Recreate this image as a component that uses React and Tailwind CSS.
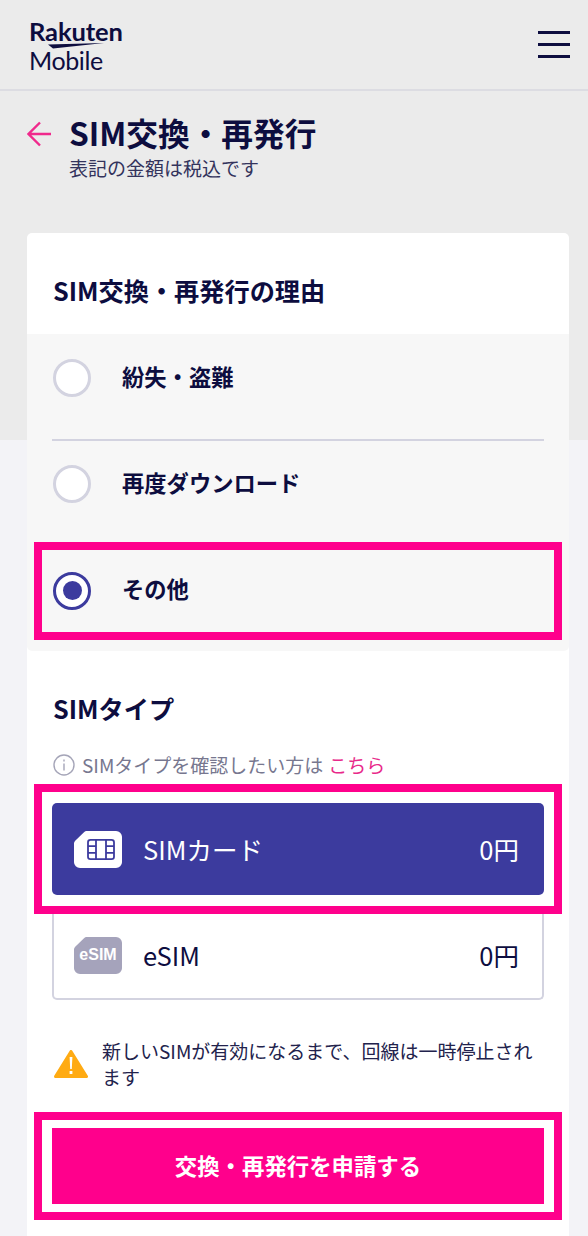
import React from 'react';

const FONT = "font-['Noto_Sans_CJK_JP','Noto_Sans',sans-serif]";

function Radio({ checked }) {
    if (checked) {
        return (
            <span className="w-[38px] h-[38px] rounded-full border-[3px] border-[#3c3b9e] bg-white flex items-center justify-center shrink-0">
                <span className="w-[19px] h-[19px] rounded-full bg-[#3c3b9e]" />
            </span>
        );
    }
    return <span className="w-[38px] h-[38px] rounded-full border-[3px] border-[#d3d3e0] bg-white shrink-0" />;
}

function SimCardIcon() {
    return (
        <svg width="48" height="37" viewBox="0 0 48 38" preserveAspectRatio="none" className="shrink-0">
            <path d="M13 0H42a6 6 0 0 1 6 6V32a6 6 0 0 1-6 6H6a6 6 0 0 1-6-6V13a4 4 0 0 1 1.2-3L10 1.2A4 4 0 0 1 13 0Z" fill="#fff" />
            <g fill="none" stroke="#3c3b9e" strokeWidth="1.8">
                <rect x="14" y="9" width="26" height="20" rx="2.5" />
                <path d="M22 9V29M32 9V29M14 15.5H22M14 22.5H22M32 15.5H40M32 22.5H40" />
            </g>
        </svg>
    );
}

function EsimIcon() {
    return (
        <span className="relative w-12 h-[37px] shrink-0 flex items-center justify-center">
            <svg width="48" height="37" viewBox="0 0 48 38" preserveAspectRatio="none" className="absolute inset-0">
                <path d="M13 0H42a6 6 0 0 1 6 6V32a6 6 0 0 1-6 6H6a6 6 0 0 1-6-6V13a4 4 0 0 1 1.2-3L10 1.2A4 4 0 0 1 13 0Z" fill="#a5a3bb" />
            </svg>
            <span className="relative text-white text-[16px] leading-[20px] font-bold font-['Liberation_Sans',sans-serif]">eSIM</span>
        </span>
    );
}

export default function App() {
    return (
        <div className={`${FONT} w-[588px] h-[1236px] overflow-hidden text-[#0d0d3f] bg-[linear-gradient(to_bottom,#ebebeb_0,#ebebeb_440px,#f3f3f7_440px)]`}>
            <header className="h-[91px] border-b-2 border-[#dcdce2] pl-[29px] pr-[18px] flex items-center justify-between">
                <div className="relative w-[100px] h-[60px] font-['Lato',sans-serif]">
                    <div className="mt-[2px] text-[25.5px] font-bold leading-[29px] tracking-[-0.1px]">Rakuten</div>
                    <svg width="56" height="6" viewBox="0 0 56 6" className="absolute left-[19px] top-[28px]">
                        <path d="M0 1.5 56 0 5 5.5Z" fill="#0d0d3f" />
                    </svg>
                    <div className="text-[25px] font-normal leading-[29px] tracking-[-0.4px]">Mobile</div>
                </div>
                <svg width="32" height="27" viewBox="0 0 32 27" stroke="#0d0d3f" strokeWidth="3">
                    <path d="M0 1.5H32M0 13.5H32M0 25.5H32" />
                </svg>
            </header>

            <div className="h-[142px] pl-[27px] pt-[20px] flex items-start">
                <svg width="24" height="26" viewBox="0 0 24 26" fill="none" stroke="#f0298c" strokeWidth="2.4" className="mt-[10px] shrink-0">
                    <path d="M24 13H2M13 1.5 1.5 13 13 24.5" />
                </svg>
                <div className="ml-[18px]">
                    <h1 className="text-[31.7px] font-bold leading-[42px]">SIM交換・再発行</h1>
                    <p className="mt-px text-[19px] leading-[28px] text-[#33335c]">表記の金額は税込です</p>
                </div>
            </div>

            <main className="ml-[27px] w-[542px] h-[1003px] bg-white rounded-t-[5px]">
                <h2 className="h-[101px] pl-[26px] pt-[38px] text-[25.2px] font-bold leading-[38px]">SIM交換・再発行の理由</h2>

                <div className="bg-[#f7f7f7] pb-[11px] rounded-b-[5px]">
                    <div className="pl-[26px] pt-[25px] pb-[42px] flex items-center">
                        <Radio />
                        <span className="ml-[31px] pb-[4px] text-[22.3px] font-bold leading-[34px]">紛失・盗難</span>
                    </div>
                    <div className="mx-[25px] h-[2px] -mb-px bg-[#d3d3e0]" />
                    <div className="pl-[26px] pt-[25px] pb-[39px] flex items-center">
                        <Radio />
                        <span className="ml-[31px] pb-[4px] text-[22.3px] font-bold leading-[34px]">再度ダウンロード</span>
                    </div>
                    <div className="mx-[7px] h-[98px] border-8 border-[#ff008c] pl-[11px] pb-px flex items-center">
                        <Radio checked />
                        <span className="ml-[31px] pb-[5px] text-[22.3px] font-bold leading-[34px]">その他</span>
                    </div>
                </div>

                <h2 className="pl-[26px] pt-[38px] text-[25.2px] font-bold leading-[38px]">SIMタイプ</h2>
                <p className="pl-[26px] mt-[24px] flex items-center text-[19px] leading-[28px] text-[#77778f]">
                    <svg width="22" height="22" viewBox="0 0 22 22" fill="none" stroke="#a5a5b8" strokeWidth="1.4" className="shrink-0 mr-[7px]">
                        <circle cx="11" cy="11" r="10" />
                        <path d="M11 9.5V16.5M11 5.5V7.5" />
                    </svg>
                    SIMタイプを確認したい方は
                    <span className="ml-[5px] text-[#e8298a]">こちら</span>
                </p>

                <div className="mx-[7px] mt-[5px] border-8 border-[#ff008c] bg-white px-[10px] py-[11px]">
                    <div className="h-[92px] bg-[#3c3b9e] rounded-[5px] pl-[22px] pr-[25px] flex items-center text-white text-[25.5px]">
                        <SimCardIcon />
                        <span className="ml-[21px]">SIMカード</span>
                        <span className="ml-auto">0円</span>
                    </div>
                </div>
                <div className="mx-[25px] h-[86px] border-2 border-t-0 border-[#d3d3e0] rounded-b-[5px] pl-[20px] pr-[23px] pb-[2px] flex items-center text-[25.5px]">
                    <EsimIcon />
                    <span className="ml-[21px]">eSIM</span>
                    <span className="ml-auto">0円</span>
                </div>

                <div className="mt-[38px] pl-[27px] pr-[30px] flex items-center text-[19px] leading-[26px] text-[#22224c]">
                    <svg width="34" height="28" viewBox="0 0 34 28" className="shrink-0 mr-[14px]">
                        <path d="M17 1.5 32.5 26.5H1.5Z" fill="#ffab13" stroke="#ffab13" strokeWidth="3" strokeLinejoin="round" />
                        <path d="M15.6 7H18.4L17.8 19H16.2ZM15.6 21H18.4V24H15.6Z" fill="#fff" />
                    </svg>
                    <p>新しいSIMが有効になるまで、回線は一時停止されます</p>
                </div>

                <div className="mx-[7px] mt-[22px] border-8 border-[#ff008c] bg-white px-[10px] py-[8px]">
                    <button className="block w-full h-[76px] bg-[#ff008c] text-white text-[22.4px] font-bold">交換・再発行を申請する</button>
                </div>
            </main>
        </div>
    );
}
